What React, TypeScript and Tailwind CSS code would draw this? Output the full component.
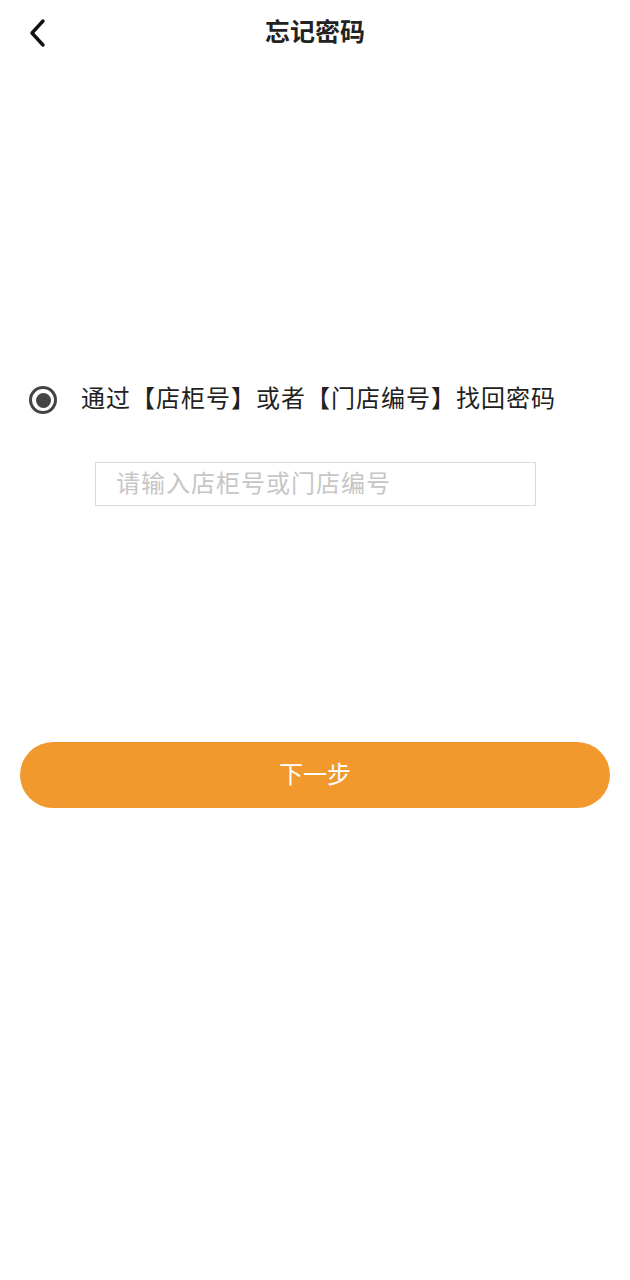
import { useState } from "react";

const font = "font-['Noto_Sans_CJK_SC','Noto_Sans',sans-serif]";

export default function App() {
    const [code, setCode] = useState("");

    return (
        <div className={`min-h-[1280px] w-full bg-white ${font}`}>
            {/* header */}
            <div className="relative flex h-[64px] items-center justify-center">
                <button className="absolute left-[24px] top-[16px] flex h-[34px] w-[28px] items-center justify-center">
                    <svg width="20" height="30" viewBox="0 0 20 30" fill="none">
                        <path d="M15 3 L4 15 L15 27" stroke="#111" strokeWidth="3.4" strokeLinecap="round" strokeLinejoin="round" />
                    </svg>
                </button>
                <h1 className="pb-[2px] text-[25px] font-bold text-[#222]">忘记密码</h1>
            </div>

            {/* option */}
            <div className="mt-[319px] flex items-start pl-[29px]">
                <div className="mt-[3px] flex h-[28px] w-[28px] items-center justify-center rounded-full border-[3px] border-[#444]">
                    <div className="h-[15px] w-[15px] rounded-full bg-[#444]" />
                </div>
                <span className="ml-[24px] text-[24px] leading-[28px] tracking-[1px] text-[#222]">
                    通过【店柜号】或者【门店编号】找回密码
                </span>
            </div>

            <div className="mt-[48px] flex pl-[95px]">
                <input
                    value={code}
                    onChange={(e) => setCode(e.target.value)}
                    placeholder="请输入店柜号或门店编号"
                    className="h-[44px] w-[441px] border border-[#d9d9d9] px-[20px] pb-[6px] text-[24px] leading-[30px] tracking-[1px] text-[#333] outline-none placeholder:text-[#c6c6c6]"
                />
            </div>

            <div className="mt-[236px] px-[20px]">
                <button className="flex h-[66px] w-full items-center justify-center rounded-full bg-[#f2992e] pb-[4px] text-[24px] text-white">
                    下一步
                </button>
            </div>
        </div>
    );
}
